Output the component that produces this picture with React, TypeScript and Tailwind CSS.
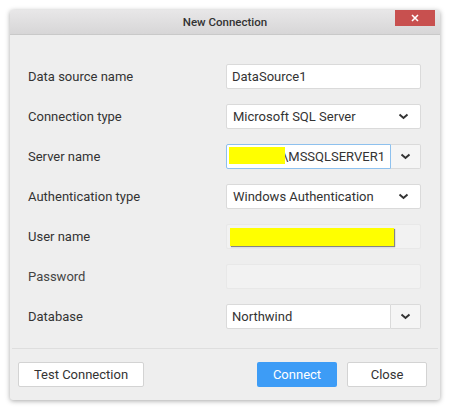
import React from "react";

const Chevron = () => (
  <svg width="11" height="7" viewBox="0 0 11 7" className="block">
    <polyline points="1.5,1.5 5.5,5 9.5,1.5" fill="none" stroke="#333" strokeWidth="2" />
  </svg>
);

const Label = ({ children, muted }: { children: React.ReactNode; muted?: boolean }) => (
  <div className={`w-[198px] text-[13px] ${muted ? "text-[#444]" : "text-[#333]"}`}>{children}</div>
);

export default function App() {
  return (
    <div
      className="w-[450px] h-[410px] bg-white pt-[10px] pl-[10px]"
      style={{ fontFamily: "Roboto, 'Liberation Sans', sans-serif" }}
    >
      <div className="relative w-[430px] h-[390px] bg-[#eeeeee] rounded-[3px] flex flex-col shadow-[0_1px_5px_rgba(0,0,0,0.35)] overflow-hidden">
        {/* title bar */}
        <div className="h-[25px] shrink-0 flex items-center justify-center bg-gradient-to-b from-[#e8e7e8] to-[#d7d6d7] border-b border-[#c9c9c9]">
          <span className="text-[11.5px] font-medium text-[#333] pt-[1px]">New Connection</span>
        </div>
        <button className="absolute top-0 right-[5px] w-[40px] h-[16px] bg-[#c8504f] flex items-center justify-center">
          <svg width="8" height="8" viewBox="0 0 8 8">
            <path d="M1 1 L7 7 M7 1 L1 7" stroke="white" strokeWidth="1.6" />
          </svg>
        </button>

        {/* body */}
        <div className="flex-1 flex flex-col gap-[15px] pt-[29px] pl-[18px] pr-[19px]">
          {/* row 1 */}
          <div className="flex items-center h-[25px]">
            <Label>Data source name</Label>
            <div className="flex-1 h-[25px] bg-white border border-[#dadada] rounded-[2px] flex items-center pl-[5px] text-[13px] text-[#333]">
              DataSource1
            </div>
          </div>
          {/* row 2 */}
          <div className="flex items-center h-[25px]">
            <Label>Connection type</Label>
            <div className="flex-1 h-[25px] bg-white border border-[#dadada] rounded-[2px] flex items-center justify-between pl-[6px] pr-[11px] text-[13px] text-[#333]">
              <span>Microsoft SQL Server</span>
              <Chevron />
            </div>
          </div>
          {/* row 3 */}
          <div className="flex items-center h-[25px]">
            <Label>Server name</Label>
            <div className="flex-1 h-[25px] flex">
              <div className="relative flex-1 h-[25px] bg-white border border-[#8ec1ee] rounded-l-[2px] flex items-center justify-end pr-[5px] text-[13px] text-[#333]">
                <div className="absolute left-[2px] top-[2px] w-[56px] h-[17px] bg-[#ffff00]" />
                <span>\MSSQLSERVER1</span>
              </div>
              <div className="w-[30px] h-[25px] bg-[#f5f5f5] border border-l-0 border-[#dadada] rounded-r-[2px] flex items-center justify-center">
                <Chevron />
              </div>
            </div>
          </div>
          {/* row 4 */}
          <div className="flex items-center h-[25px]">
            <Label>Authentication type</Label>
            <div className="flex-1 h-[25px] bg-white border border-[#dadada] rounded-[2px] flex items-center justify-between pl-[6px] pr-[11px] text-[13px] text-[#333]">
              <span>Windows Authentication</span>
              <Chevron />
            </div>
          </div>
          {/* row 5 */}
          <div className="flex items-center h-[25px]">
            <Label>User name</Label>
            <div className="flex-1 h-[25px] bg-[#f2f2f2] border border-[#e8e8e8] rounded-[2px] flex items-center pl-[3px]">
              <div className="w-[164px] h-[18px] bg-[#ffff00] shadow-[1px_1px_1px_rgba(0,0,0,0.45)]" />
            </div>
          </div>
          {/* row 6 */}
          <div className="flex items-center h-[25px]">
            <Label muted>Password</Label>
            <div className="flex-1 h-[25px] bg-[#f2f2f2] border border-[#e8e8e8] rounded-[2px]" />
          </div>
          {/* row 7 */}
          <div className="flex items-center h-[25px]">
            <Label>Database</Label>
            <div className="flex-1 h-[25px] flex">
              <div className="flex-1 h-[25px] bg-white border border-[#dadada] rounded-l-[2px] flex items-center pl-[5px] text-[13px] text-[#333]">
                Northwind
              </div>
              <div className="w-[30px] h-[25px] bg-[#f5f5f5] border border-l-0 border-[#dadada] rounded-r-[2px] flex items-center justify-center">
                <Chevron />
              </div>
            </div>
          </div>
        </div>

        {/* footer */}
        <div className="h-[52px] shrink-0 border-t border-[#dedede] mx-[2px] flex items-start pt-[13px] pl-[6px] pr-[11px]">
          <button className="w-[126px] h-[25px] bg-white border border-[#d3d3d3] rounded-[2px] text-[13px] text-[#333]">
            Test Connection
          </button>
          <div className="flex-1" />
          <button className="w-[80px] h-[25px] bg-[#3d9cf6] rounded-[2px] text-[13px] text-white">
            Connect
          </button>
          <button className="ml-[10px] w-[80px] h-[25px] bg-white border border-[#d3d3d3] rounded-[2px] text-[13px] text-[#333]">
            Close
          </button>
        </div>
      </div>
    </div>
  );
}
